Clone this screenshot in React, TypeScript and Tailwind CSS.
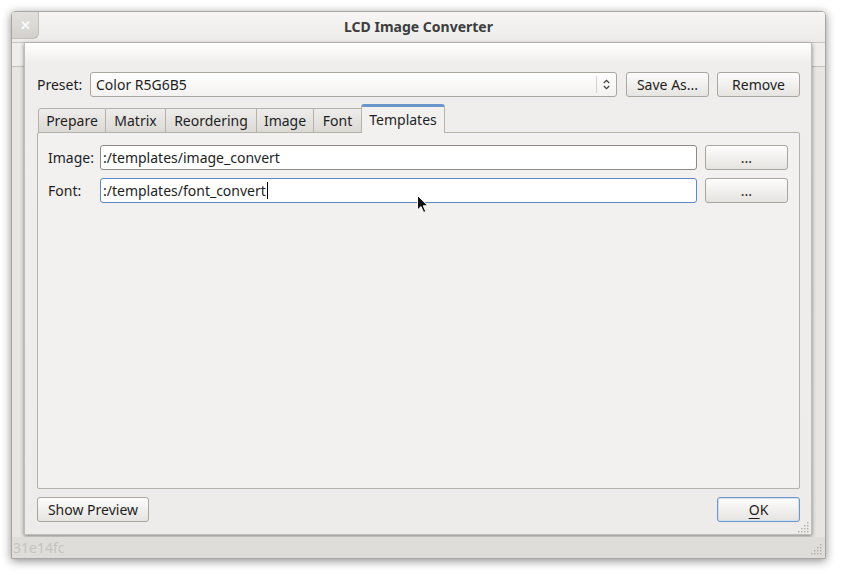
import React from "react";

const font = { fontFamily: '"Noto Sans", "Open Sans", sans-serif' };

function Btn({ children, className = "", focus = false }: { children: React.ReactNode; className?: string; focus?: boolean }) {
  return (
    <div
      className={
        "flex items-center justify-center rounded-[3px] border bg-gradient-to-b from-[#fdfdfc] to-[#e6e4e1] text-[14px] text-[#1e1e1e] " +
        (focus ? "border-[#6f97c8] shadow-[inset_0_0_0_1px_#cfe0f3]" : "border-[#a9a59f]") +
        " " +
        className
      }
    >
      {children}
    </div>
  );
}

function Grip({ className = "" }: { className?: string }) {
  const dots = [
    [8, 0],
    [5, 3],
    [8, 3],
    [2, 6],
    [5, 6],
    [8, 6],
    [-1, 9],
    [2, 9],
    [5, 9],
    [8, 9],
  ];
  return (
    <svg width="11" height="11" viewBox="-1 0 11 11" className={className}>
      {dots.map(([x, y], i) => (
        <rect key={i} x={x} y={y} width="1.5" height="1.5" fill="#b5b2ad" />
      ))}
    </svg>
  );
}

const tabs: { t: string; w: string }[] = [
  { t: "Prepare", w: "w-[68px]" },
  { t: "Matrix", w: "w-[60px]" },
  { t: "Reordering", w: "w-[91px]" },
  { t: "Image", w: "w-[57px]" },
  { t: "Font", w: "w-[48px]" },
];

export default function App() {
  return (
    <div className="w-[842px] h-[575px] bg-white pl-[11px] pt-[11px]" style={font}>
      <div className="w-[815px] h-[548px] flex flex-col rounded-t-[4px] border border-[#a8a6a2] shadow-[0_2px_10px_rgba(0,0,0,0.45)] overflow-hidden">
        {/* title bar */}
        <div className="h-[31px] shrink-0 flex items-center bg-gradient-to-b from-[#f7f6f5] to-[#ecebe9] border-b border-[#c9c6c1] relative">
          <div className="w-[27px] h-[27px] self-start flex items-center justify-center rounded-br-[6px] bg-gradient-to-b from-[#e2e0dd] to-[#d4d1cd] border-r border-b border-[#c2beb9] text-[#f9f9f9] text-[13px] font-bold leading-none">
            ✕
          </div>
          <div className="flex-1 text-center text-[14px] font-bold text-[#3d3d3d] pr-[27px] -mt-[1px]">LCD Image Converter</div>
        </div>
        {/* body */}
        <div className="flex-1 relative bg-[#e8e6e3]">
          <div className="h-[24px] border-b border-[#c4c1bc] bg-[#efeeec]" />
          <div className="absolute left-[12px] top-0 w-[788px] h-[492px] flex flex-col border border-t-0 border-[#c0bdb8] bg-gradient-to-b from-[#ffffff] via-[#efeeec] via-[20px] to-[#edecea] shadow-[0_1px_4px_rgba(0,0,0,0.45)] pt-[29px] pl-[12px] pr-[11px] pb-[12px]">
            {/* preset row */}
            <div className="flex items-center h-[25px]">
              <div className="text-[14px] text-[#1e1e1e] w-[53px]">Preset:</div>
              <div className="flex-1 h-[25px] flex items-center rounded-[3px] border border-[#a9a59f] bg-gradient-to-b from-[#ffffff] to-[#f3f2f0]">
                <div className="flex-1 pl-[5px] text-[14px] text-[#1e1e1e]">Color R5G6B5</div>
                <div className="w-px h-[17px] bg-[#d4d1cc]" />
                <div className="w-[19px] flex items-center justify-center">
                  <svg width="7" height="11" viewBox="0 0 7 11">
                    <path d="M0.8 4 L3.5 1.3 L6.2 4" stroke="#3a3a3a" strokeWidth="1.1" fill="none" />
                    <path d="M0.8 7 L3.5 9.7 L6.2 7" stroke="#3a3a3a" strokeWidth="1.1" fill="none" />
                  </svg>
                </div>
              </div>
              <Btn className="w-[83px] h-[25px] ml-[9px]">Save As...</Btn>
              <Btn className="w-[83px] h-[25px] ml-[8px]">Remove</Btn>
            </div>
            {/* tabs */}
            <div className="flex items-end mt-[7px] h-[29px] pl-[1px] relative z-10">
              {tabs.map(({ t, w }, i) => (
                <div
                  key={t}
                  className={
                    "h-[25px] flex items-center justify-center text-[14px] text-[#1e1e1e] border-t border-b border-[#b5b1ab] bg-gradient-to-b from-[#eeedeb] to-[#dcd9d5] " +
                    w +
                    " " +
                    (i === 0 ? "border-l rounded-tl-[3px] " : "") +
                    "border-r"
                  }
                >
                  {t}
                </div>
              ))}
              <div className="h-[29px] w-[84px] flex items-center justify-center text-[14px] text-[#1e1e1e] bg-[#f2f1f0] border-x border-[#b5b1ab] border-t-[3px] border-t-[#6b96cb] rounded-t-[3px] -ml-px pb-[1px]">
                Templates
              </div>
            </div>
            {/* pane */}
            <div className="flex-1 -mt-px border border-[#b5b1ab] rounded-[2px] bg-[#f2f1f0] pt-[12px] pl-[10px] pr-[11px] flex flex-col gap-[8px]">
              <div className="flex items-center h-[25px]">
                <div className="w-[52px] text-[14px] text-[#1e1e1e]">Image:</div>
                <div className="flex-1 h-[25px] flex items-center rounded-[3px] border border-[#8e8a85] bg-white pl-[2px] text-[14px] text-[#1e1e1e]">
                  :/templates/image_convert
                </div>
                <Btn className="w-[83px] h-[25px] ml-[8px]">...</Btn>
              </div>
              <div className="flex items-center h-[25px]">
                <div className="w-[52px] text-[14px] text-[#1e1e1e]">Font:</div>
                <div className="flex-1 h-[25px] flex items-center rounded-[3px] border border-[#5a89c4] bg-white pl-[2px] text-[14px] text-[#1e1e1e] relative">
                  :/templates/font_convert
                  <span className="inline-block w-px h-[17px] bg-black ml-px" />
                </div>
                <Btn className="w-[83px] h-[25px] ml-[8px]">...</Btn>
              </div>
            </div>
            {/* bottom buttons */}
            <div className="flex items-center justify-between mt-[8px] h-[25px] relative">
              <Btn className="h-[25px] w-[112px]">Show Preview</Btn>
              <Btn className="w-[83px] h-[25px]" focus>
                <span>
                  <span className="underline underline-offset-[3px]">O</span>K
                </span>
              </Btn>
              <Grip className="absolute right-[-9px] bottom-[-11px]" />
            </div>
          </div>
        </div>
        {/* status bar */}
        <div className="h-[21px] shrink-0 bg-[#dfddda] flex items-center pl-[1px] text-[14px] text-[#c6c3bf] relative">
          31e14fc
          <Grip className="absolute right-[3px] bottom-[3px]" />
        </div>
      </div>
      {/* mouse cursor */}
      <svg className="absolute left-[417px] top-[195px]" width="12" height="19" viewBox="0 0 12 19">
        <path d="M0.5 0.5 L0.5 15 L4 11.6 L6.6 17.5 L8.8 16.5 L6.3 10.8 L11 10.8 Z" fill="#111" stroke="#fff" strokeWidth="1" />
      </svg>
    </div>
  );
}
